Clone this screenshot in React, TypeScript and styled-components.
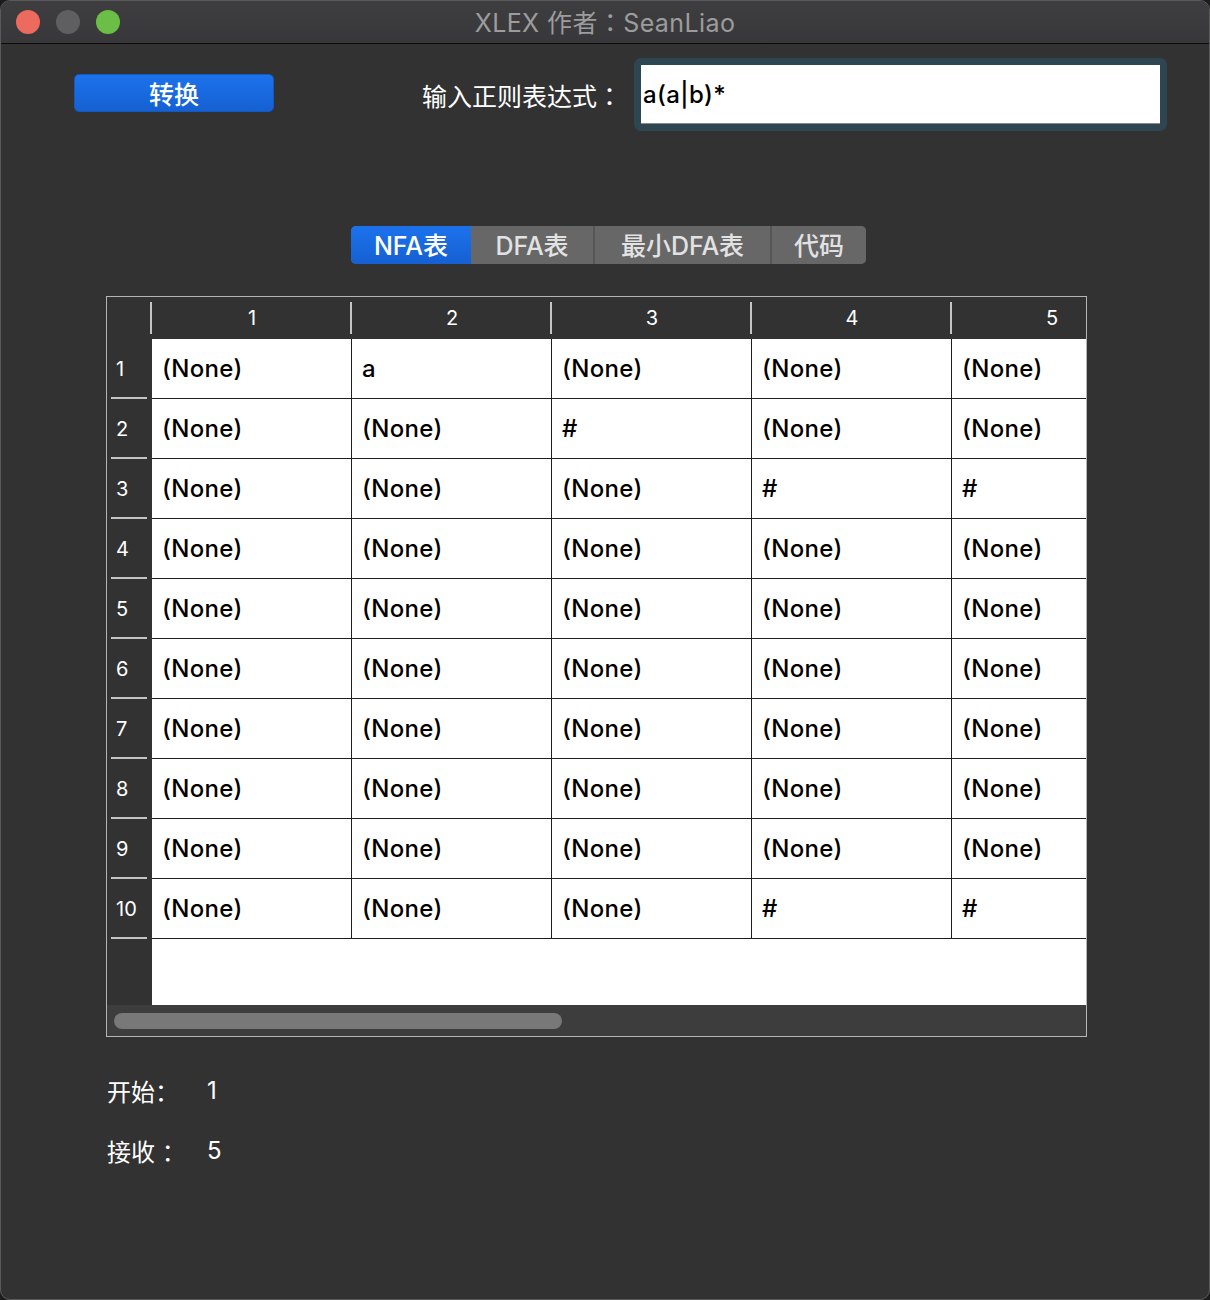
import React from 'react'
import styled, {createGlobalStyle} from 'styled-components'

const GlobalStyle = createGlobalStyle`
  html, body {
    margin: 0;
    padding: 0;
    background: #1c1c1c;
  }
  body {
    font-family: Inter, "Noto Sans CJK SC", sans-serif;
  }
`

type Cell = string

const columns = [1, 2, 3, 4, 5]

const N = '(None)'
const rows: Cell[][] = [
    [N, 'a', N, N, N],
    [N, N, '#', N, N],
    [N, N, N, '#', '#'],
    [N, N, N, N, N],
    [N, N, N, N, N],
    [N, N, N, N, N],
    [N, N, N, N, N],
    [N, N, N, N, N],
    [N, N, N, N, N],
    [N, N, N, '#', '#'],
]

const tabs = [
    {label: 'NFA表', width: 120},
    {label: 'DFA表', width: 124},
    {label: '最小DFA表', width: 177},
    {label: '代码', width: 94},
]

const App = () => {
    return (
        <>
            <GlobalStyle/>
            <Window>
                <TitleBar>
                    <Lights>
                        <Light $color="#ed6a5e"/>
                        <Light $color="#5f5f61"/>
                        <Light $color="#6bbf47"/>
                    </Lights>
                    <Title>XLEX 作者<Colon>：</Colon>SeanLiao</Title>
                </TitleBar>
                <Content>
                    <TopRow>
                        <ConvertButton>转换</ConvertButton>
                        <Spacer/>
                        <InputLabel>输入正则表达式<Colon>：</Colon></InputLabel>
                        <FocusRing>
                            <RegexInput>a(a|b)*</RegexInput>
                        </FocusRing>
                    </TopRow>

                    <TabBar>
                        {tabs.map((t, i) => (
                            <Tab key={t.label} $width={t.width} $active={i === 0} $last={i === tabs.length - 1}>
                                {t.label}
                            </Tab>
                        ))}
                    </TabBar>

                    <TableFrame>
                        <TableGrid>
                            <Corner/>
                            <HeaderStrip>
                                {columns.map(c => (
                                    <HeaderCell key={c}>{c}</HeaderCell>
                                ))}
                            </HeaderStrip>
                            <RowHeaderColumn>
                                {rows.map((_, i) => (
                                    <RowHeaderCell key={i}>{i + 1}</RowHeaderCell>
                                ))}
                            </RowHeaderColumn>
                            <Body>
                                {rows.map((r, i) => (
                                    <Row key={i}>
                                        {r.map((v, j) => (
                                            <DataCell key={j}>{v}</DataCell>
                                        ))}
                                    </Row>
                                ))}
                            </Body>
                        </TableGrid>
                        <ScrollTrack>
                            <ScrollThumb/>
                        </ScrollTrack>
                    </TableFrame>

                    <InfoList>
                        <InfoRow>
                            <InfoLabel>开始：</InfoLabel>
                            <InfoValue>1</InfoValue>
                        </InfoRow>
                        <InfoRow>
                            <InfoLabel>接收 ：</InfoLabel>
                            <InfoValue>5</InfoValue>
                        </InfoRow>
                    </InfoList>
                </Content>
            </Window>
        </>
    )
}
export default App

const Window = styled.div`
  width: 1210px;
  height: 1300px;
  box-sizing: border-box;
  border: 1px solid #5a5a5a;
  border-radius: 10px;
  overflow: hidden;
  background: #323232;
  display: flex;
  flex-direction: column;
`

const TitleBar = styled.div`
  position: relative;
  height: 42px;
  flex-shrink: 0;
  background: linear-gradient(#3e3e40, #38383a);
  border-bottom: 1px solid #0c0c0c;
  display: flex;
  align-items: center;
  justify-content: center;
`

const Lights = styled.div`
  position: absolute;
  left: 15px;
  top: 9px;
  display: flex;
  gap: 16px;
`

const Light = styled.span<{ $color: string }>`
  width: 24px;
  height: 24px;
  border-radius: 50%;
  background: ${p => p.$color};
`

const Title = styled.div`
  color: #9c9c9c;
  font-size: 25px;
  letter-spacing: 0.4px;
  margin-bottom: 3px;
`

// centred full-width colon, as the macOS CJK font draws it
const Colon = styled.span`
  font-family: "Noto Sans CJK TC", sans-serif;
`

const Content = styled.div`
  display: flex;
  flex-direction: column;
`

const TopRow = styled.div`
  display: flex;
  align-items: center;
  margin-top: 14px;
  padding: 0 42px 0 73px;
`

const ConvertButton = styled.button`
  width: 200px;
  height: 38px;
  margin-bottom: 3px;
  border: 1px solid #1458c4;
  border-radius: 5px;
  background: linear-gradient(#1c72ec, #1560d2);
  color: #ffffff;
  font-family: inherit;
  font-size: 25px;
  font-weight: 500;
  padding: 0;
`

const Spacer = styled.div`
  flex: 1;
`

const InputLabel = styled.div`
  color: #ffffff;
  font-size: 25px;
  margin-right: 12px;
`

const FocusRing = styled.div`
  width: 533px;
  height: 73px;
  box-sizing: border-box;
  padding: 7px;
  border-radius: 7px;
  background: #2e4552;
`

const RegexInput = styled.div`
  height: 100%;
  box-sizing: border-box;
  background: #ffffff;
  border-bottom: 1px solid #8a8a8a;
  display: flex;
  align-items: center;
  padding-left: 2px;
  color: #000000;
  font-size: 24px;
  font-weight: 500;
  letter-spacing: 0.4px;
`

const TabBar = styled.div`
  display: flex;
  align-self: flex-start;
  margin: 95px 0 0 350px;
  height: 38px;
  border-radius: 5px;
  overflow: hidden;
  background: #676767;
`

const Tab = styled.div<{ $width: number, $active: boolean, $last: boolean }>`
  width: ${p => p.$width}px;
  box-sizing: border-box;
  display: flex;
  align-items: center;
  justify-content: center;
  padding-bottom: 2px;
  font-size: 25px;
  font-weight: 500;
  color: ${p => p.$active ? '#ffffff' : '#e2e2e2'};
  background: ${p => p.$active ? 'linear-gradient(#1c72ec, #1560d2)' : '#676767'};
  border-right: ${p => p.$last || p.$active ? 'none' : '2px solid #565656'};
`

const TableFrame = styled.div`
  width: 981px;
  height: 741px;
  box-sizing: border-box;
  margin: 32px 0 0 105px;
  border: 1px solid #b4b4b4;
  display: flex;
  flex-direction: column;
  background: #323232;
`

const TableGrid = styled.div`
  flex: 1;
  min-height: 0;
  display: grid;
  grid-template-columns: 45px 1fr;
  grid-template-rows: 42px 1fr;
`

const Corner = styled.div`
  background: #323232;
`

const HeaderStrip = styled.div`
  display: flex;
  overflow: hidden;
  margin-left: -2px;
  padding-left: 2px;
  background: #323232;
`

const HeaderCell = styled.div`
  position: relative;
  flex: 0 0 200px;
  display: flex;
  align-items: center;
  justify-content: center;
  color: #ffffff;
  font-size: 20px;

  &::before {
    content: "";
    position: absolute;
    left: -2px;
    top: 5px;
    bottom: 5px;
    width: 2px;
    background: #c4c4c4;
  }
`

const RowHeaderColumn = styled.div`
  background: #323232;
`

const RowHeaderCell = styled.div`
  position: relative;
  height: 60px;
  display: flex;
  align-items: center;
  padding-left: 9px;
  color: #ffffff;
  font-size: 20px;

  &::after {
    content: "";
    position: absolute;
    left: 4px;
    right: 5px;
    bottom: 0;
    height: 2px;
    background: #c4c4c4;
  }
`

const Body = styled.div`
  overflow: hidden;
  background: #ffffff;
`

const Row = styled.div`
  display: flex;
  height: 60px;
  box-sizing: border-box;
  border-bottom: 1px solid #1e1e1e;
`

const DataCell = styled.div`
  flex: 0 0 200px;
  box-sizing: border-box;
  border-right: 1px solid #1e1e1e;
  display: flex;
  align-items: center;
  padding-left: 10px;
  color: #000000;
  font-size: 24px;
  font-weight: 500;
  letter-spacing: 0.3px;
`

const ScrollTrack = styled.div`
  height: 31px;
  flex-shrink: 0;
  box-sizing: border-box;
  background: #3d3d3d;
  padding: 8px 0 0 7px;
`

const ScrollThumb = styled.div`
  width: 448px;
  height: 16px;
  border-radius: 8px;
  background: #787878;
`

const InfoList = styled.div`
  display: flex;
  flex-direction: column;
  gap: 30px;
  margin: 38px 0 0 106px;
`

const InfoRow = styled.div`
  display: flex;
  align-items: center;
  height: 30px;
  color: #ffffff;
  font-size: 24px;
`

const InfoLabel = styled.div`
  width: 100px;
`

const InfoValue = styled.div``
